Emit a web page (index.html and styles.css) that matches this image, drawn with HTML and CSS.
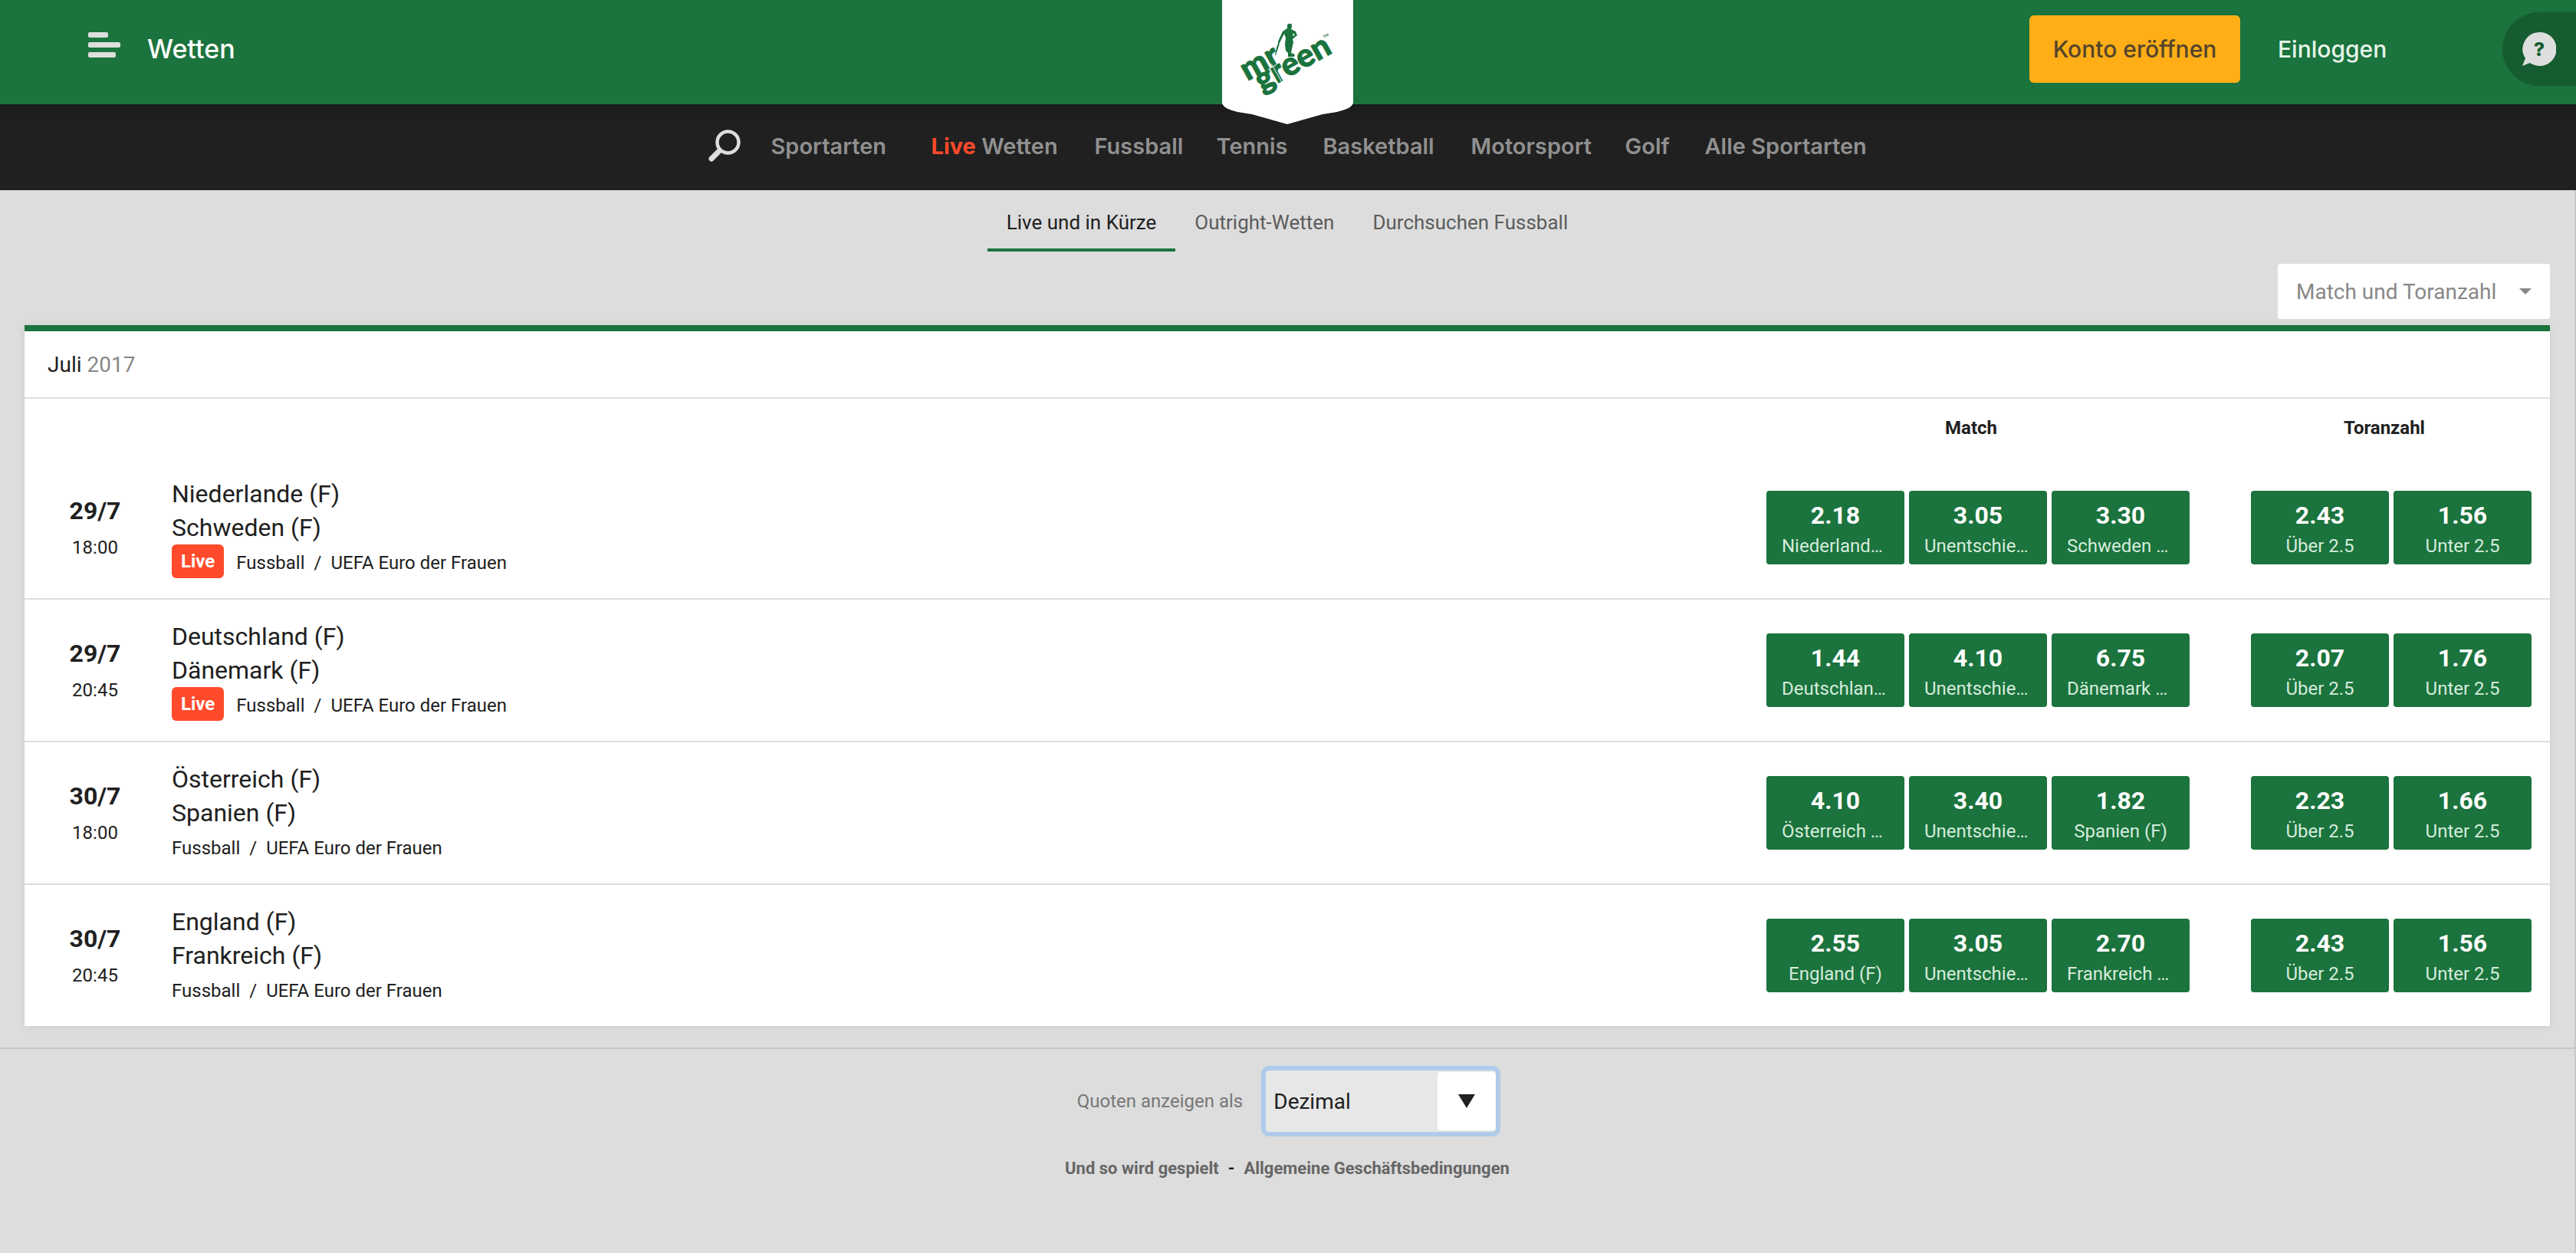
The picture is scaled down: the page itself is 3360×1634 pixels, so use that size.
FILE: index.html
```html
<!DOCTYPE html>
<html lang="de">
<head>
<meta charset="utf-8">
<title>Wetten</title>
<link rel="stylesheet" href="styles.css">
</head>
<body>
<header class="topbar">
  <div class="brand">
    <button class="menu" type="button" aria-label="Menu">
      <svg width="42" height="34" viewBox="0 0 42 34" fill="#dcdfdd"><rect width="26" height="7" rx="2"/><rect y="13" width="42" height="7" rx="2"/><rect y="26" width="36" height="7" rx="2"/></svg>
    </button>
    <a class="section" href="#">Wetten</a>
  </div>
  <a class="logo" href="#" aria-label="mr green">
    <svg width="171" height="162" viewBox="34 0 171 162">
      <path d="M34 0H205V134C204 140 195 143 184 146L165 149L119 162L73 149L54 146C43 143 35 140 34 134Z" fill="#fff"/>
      <g fill="#1b733d">
        <path d="M119 34Q119 31 121 31Q123 30 125 32L125 35L124 38L130 41L132 46L126 51L127 55L125 64L124 69L129 71L128 74L120 74L120 69L117 66L116 58L117 49L115 44L109 56L108 60L104 72L103 72L105 62L107 57L107 54L113 41L119 37ZM127 43L126 47L129 46Z"/>
        <text class="logo-text" transform="translate(67 106) rotate(-29)">mr</text>
        <text class="logo-text" transform="translate(86 120) rotate(-29)">green</text>
        <text class="logo-tm" transform="translate(167 50) rotate(-29)">TM</text>
      </g>
      <path d="M94 91L106 83M98 83L112 107" stroke="#fff" fill="none"/>
    </svg>
  </a>
  <div class="account">
    <button class="signup" type="button">Konto eröffnen</button>
    <a class="login" href="#">Einloggen</a>
    <button class="help" type="button" aria-label="Hilfe">
      <svg width="44" height="44" viewBox="0 0 44 44"><path d="M22 0A22 22 0 1 1 10 40L0 44L4 34A22 22 0 0 1 22 0Z" fill="#dcdfdd"/><text class="help-mark" x="22" y="31" text-anchor="middle">?</text></svg>
    </button>
  </div>
</header>
<nav class="sports">
  <button class="search" type="button" aria-label="Suche">
    <svg width="42" height="42" viewBox="0 0 42 42" fill="none" stroke="#dedede"><circle cx="25.500" cy="16.500" r="14" stroke-width="4.500"/><path d="M14 28L4 38" stroke-width="7" stroke-linecap="round"/></svg>
  </button>
  <a href="#">Sportarten</a>
  <a href="#"><span class="hot">Live</span> Wetten</a>
  <a href="#">Fussball</a>
  <a href="#">Tennis</a>
  <a href="#">Basketball</a>
  <a href="#">Motorsport</a>
  <a href="#">Golf</a>
  <a href="#">Alle Sportarten</a>
</nav>
<main class="page">
  <nav class="tabs">
    <a class="active" href="#">Live und in Kürze</a>
    <a href="#">Outright-Wetten</a>
    <a href="#">Durchsuchen Fussball</a>
  </nav>
  <div class="filter">
    <span class="market">
      <select aria-label="Wettart"><option>Match und Toranzahl</option></select>
      <svg width="16" height="8" viewBox="0 0 16 8"><path d="M0 0H16L8 8Z" fill="#888"/></svg>
    </span>
  </div>
  <section class="card">
    <h2>Juli <span>2017</span></h2>
    <table class="events">
      <colgroup><col class="c-date"><col><col class="c-match"><col class="c-goals"></colgroup>
      <thead><tr><td></td><td></td><th scope="col">Match</th><th scope="col">Toranzahl</th></tr></thead>
      <tbody>
        <tr>
          <td class="when"><b>29/7</b><time>18:00</time></td>
          <td class="event"><a href="#">Niederlande (F)<br>Schweden (F)</a><div class="path"><span class="live">Live</span><span>Fussball</span><span>/</span><span>UEFA Euro der Frauen</span></div></td>
          <td><div class="odds"><button type="button"><b>2.18</b><span class="long">Niederland…</span></button><button type="button"><b>3.05</b><span class="long">Unentschie…</span></button><button type="button"><b>3.30</b><span class="long">Schweden …</span></button></div></td>
          <td><div class="odds"><button type="button"><b>2.43</b><span>Über 2.5</span></button><button type="button"><b>1.56</b><span>Unter 2.5</span></button></div></td>
        </tr>
        <tr>
          <td class="when"><b>29/7</b><time>20:45</time></td>
          <td class="event"><a href="#">Deutschland (F)<br>Dänemark (F)</a><div class="path"><span class="live">Live</span><span>Fussball</span><span>/</span><span>UEFA Euro der Frauen</span></div></td>
          <td><div class="odds"><button type="button"><b>1.44</b><span class="long">Deutschlan…</span></button><button type="button"><b>4.10</b><span class="long">Unentschie…</span></button><button type="button"><b>6.75</b><span class="long">Dänemark …</span></button></div></td>
          <td><div class="odds"><button type="button"><b>2.07</b><span>Über 2.5</span></button><button type="button"><b>1.76</b><span>Unter 2.5</span></button></div></td>
        </tr>
        <tr>
          <td class="when"><b>30/7</b><time>18:00</time></td>
          <td class="event"><a href="#">Österreich (F)<br>Spanien (F)</a><div class="path"><span>Fussball</span><span>/</span><span>UEFA Euro der Frauen</span></div></td>
          <td><div class="odds"><button type="button"><b>4.10</b><span class="long">Österreich …</span></button><button type="button"><b>3.40</b><span class="long">Unentschie…</span></button><button type="button"><b>1.82</b><span>Spanien (F)</span></button></div></td>
          <td><div class="odds"><button type="button"><b>2.23</b><span>Über 2.5</span></button><button type="button"><b>1.66</b><span>Unter 2.5</span></button></div></td>
        </tr>
        <tr>
          <td class="when"><b>30/7</b><time>20:45</time></td>
          <td class="event"><a href="#">England (F)<br>Frankreich (F)</a><div class="path"><span>Fussball</span><span>/</span><span>UEFA Euro der Frauen</span></div></td>
          <td><div class="odds"><button type="button"><b>2.55</b><span>England (F)</span></button><button type="button"><b>3.05</b><span class="long">Unentschie…</span></button><button type="button"><b>2.70</b><span class="long">Frankreich …</span></button></div></td>
          <td><div class="odds"><button type="button"><b>2.43</b><span>Über 2.5</span></button><button type="button"><b>1.56</b><span>Unter 2.5</span></button></div></td>
        </tr>
      </tbody>
    </table>
  </section>
  <footer class="footer">
    <div class="format">
      <label for="format">Quoten anzeigen als</label>
      <span class="format-box">
        <select id="format"><option>Dezimal</option></select>
        <span class="format-arrow"><svg width="24" height="20" viewBox="0 0 24 20"><path d="M1 1H23L12 19Z" fill="#222"/></svg></span>
      </span>
    </div>
    <div class="links"><a href="#">Und so wird gespielt</a><span class="dash">-</span><a href="#">Allgemeine Geschäftsbedingungen</a></div>
  </footer>
</main>
</body>
</html>
```
FILE: styles.css
```css
* { box-sizing: border-box; }
body {
  margin: 0;
  min-height: 100vh;
  display: flex;
  flex-direction: column;
  background: #ddd;
  color: #202020;
  font-family: Roboto, sans-serif;
  font-size: 28px;
}
a { color: inherit; text-decoration: none; }
button, select { font: inherit; color: inherit; border: 0; margin: 0; padding: 0; background: none; }
select { appearance: none; outline: 0; }
svg { display: block; }

.topbar {
  position: relative;
  z-index: 1;
  height: 136px;
  display: flex;
  justify-content: space-between;
  background: #1b733d;
  box-shadow: 0 2px 20px rgba(0, 0, 0, .3);
  font-family: Inter, sans-serif;
  font-size: 30px;
  font-weight: 500;
}
.brand { display: flex; align-items: center; height: 126px; padding-left: 115px; gap: 35px; color: #fff; }
.menu { padding-bottom: 8px; }
.section { font-size: 34px; }
.logo { position: absolute; top: 0; left: 50%; margin-left: -86px; }
.logo-text { font: 900 42px Lato, sans-serif; stroke: #1b733d; stroke-width: 1px; }
.logo-tm { font: 700 5px Lato, sans-serif; }
.account { display: flex; align-items: center; height: 128px; color: #e6f5ea; }
.signup { width: 275px; height: 88px; border-radius: 6px; background: #ffae17; color: #54442a; }
.login { width: 293px; margin-left: 49px; }
.help { width: 96px; height: 96px; padding-left: 26px; border-radius: 48px 0 0 48px; background: #165c31; }
.help-mark { font: 800 25px Inter, sans-serif; fill: #165c31; }

.sports {
  height: 112px;
  display: grid;
  grid-template-columns: 82px 209px 213px 159px 139px 193px 201px 104px 213px;
  justify-content: center;
  align-items: center;
  padding-bottom: 4px;
  background: #202020;
  color: #909090;
  font-family: Inter, sans-serif;
  font-size: 29px;
  font-weight: 600;
  white-space: nowrap;
}
.search { justify-self: start; }
.hot { color: #ff4a2b; font-weight: 700; }

.page { flex: 1; border-right: 2px solid #c8c8c8; }
.tabs { display: flex; justify-content: center; height: 80px; color: #5c5c5c; font-size: 26px; }
.tabs a { padding: 2px 25px 0; line-height: 80px; }
.tabs .active { color: #202020; border-bottom: 4px solid #1b733d; }
.filter { display: flex; justify-content: flex-end; padding: 16px 32px 8px; }
.market { width: 355px; height: 72px; display: grid; align-items: center; background: #fff; border-radius: 4px; color: #888; }
.market > * { grid-area: 1 / 1; }
.market select { width: 100%; height: 72px; padding-left: 24px; }
.market svg { justify-self: end; margin-right: 24px; pointer-events: none; }

.card { margin: 0 32px; background: #fff; border-top: 8px solid #1b733d; box-shadow: 0 0 10px rgba(0, 0, 0, .08); }
.card h2 { margin: 0; padding: 2px 0 0 30px; font-size: 28px; font-weight: 400; line-height: 84px; border-bottom: 2px solid #ddd; }
.card h2 span { color: #888; }
.events { width: 100%; table-layout: fixed; border-spacing: 0; }
.c-date { width: 184px; }
.c-match { width: 632px; }
.c-goals { width: 408px; }
.events th { height: 76px; padding: 0 62px 0 0; font-size: 24px; }
.events th:last-child { padding-right: 24px; }
.events tbody td { height: 186px; padding: 0; border-bottom: 2px solid #ddd; }
.events tbody tr:last-child td { height: 184px; border-bottom: 0; }
.events .when { padding-top: 4px; }
.when b, .when time { display: block; text-align: center; }
.when b { font-size: 32px; line-height: 48px; }
.when time { font-size: 24px; line-height: 48px; }
.events .event { padding-left: 8px; font-size: 32px; line-height: 44px; }
.path { display: flex; gap: 12px; font-size: 24px; line-height: 48px; height: 44px; }
.live { height: 44px; margin-right: 4px; padding: 0 12px; line-height: 44px; border-radius: 6px; background: #ff4a2b; color: #fff; font-weight: 700; }
.odds { display: flex; gap: 6px; padding-left: 18px; }
.odds button { width: 180px; height: 96px; padding: 8px 20px 0; border-radius: 4px; background: #1b733d; color: #fff; }
.odds b { display: block; font-size: 32px; line-height: 40px; }
.odds span { display: block; white-space: nowrap; font-size: 24px; line-height: 40px; color: #d5ecdc; }
.odds .long { text-align: left; }

.footer { margin-top: 28px; padding-top: 22px; border-top: 2px solid #c8c8c8; font-size: 24px; }
.format { display: flex; justify-content: center; align-items: center; gap: 24px; padding-left: 4px; color: #777; }
.format-box { width: 312px; height: 92px; display: grid; align-items: center; border: 6px solid #aecbeb; border-radius: 10px; background: #e7e7e7; }
.format-box > * { grid-area: 1 / 1; }
.format-box select { width: 100%; height: 80px; padding-left: 10px; font-size: 28px; color: #202020; }
.format-arrow { justify-self: end; width: 76px; height: 76px; display: grid; place-items: center; background: #fff; border-radius: 4px; pointer-events: none; }
.links { display: flex; justify-content: center; gap: 12px; padding-top: 24px; font-size: 22px; font-weight: 700; line-height: 36px; color: #666; }
.dash { color: #202020; }
```
